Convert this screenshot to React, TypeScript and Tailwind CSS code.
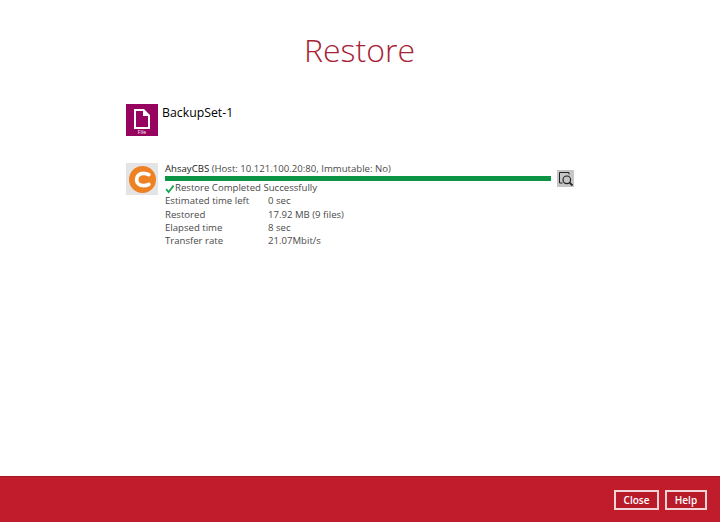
const stats = [
  { label: "Estimated time left", value: "0 sec" },
  { label: "Restored", value: "17.92 MB (9 files)" },
  { label: "Elapsed time", value: "8 sec" },
  { label: "Transfer rate", value: "21.07Mbit/s" },
];

const FileIcon = () => (
  <div className="flex h-8 w-8 shrink-0 flex-col items-center bg-[#96045f] pt-[5px]">
    <svg width="16" height="20" viewBox="0 0 16 20">
      <path d="M0 0H10L16 6V20H0ZM2 2V18H14V7H9V2Z" fill="#fff" fillRule="evenodd" />
    </svg>
    <span className="text-[5px] leading-[6px] font-semibold text-[#f0d8e6]">File</span>
  </div>
);

const CbsIcon = () => (
  <div className="flex h-8 w-8 shrink-0 items-center justify-center bg-[#e4e4e4]">
    <svg width="27" height="27" viewBox="0 0 27 27">
      <circle cx="13.5" cy="13.5" r="13.5" fill="#ee8122" />
      <path d="M19.8 8.6C18 7.6 16.2 7.3 14.6 7.3C10.4 7.3 7.6 10 7.6 13.5C7.6 17 10.4 19.7 14.6 19.7C16.2 19.7 18 19.4 19.8 18.4" fill="none" stroke="#fff" strokeWidth="3.8" strokeLinecap="round" />
    </svg>
  </div>
);

const App = () => {
  return (
    <div className="flex h-[522px] w-[720px] flex-col overflow-hidden bg-white font-['Open_Sans',sans-serif] text-[#4a4a4a]">
      <main className="flex-1 pl-[126px] pr-[146px]">
        <h1 className="mt-[28px] -ml-[127px] -mr-[146px] text-center text-[32px] leading-[44px] font-light text-[#a82236]">
          Restore
        </h1>

        <div className="mt-[32px] flex gap-1">
          <FileIcon />
          <span className="text-[12.3px] leading-[18px] text-black">BackupSet-1</span>
        </div>

        <div className="mt-[27px] flex gap-[7px]">
          <CbsIcon />
          <div className="flex-1">
            <p className="mt-[-1px] text-[9.6px] leading-[14px]">
              <span className="text-[#222]">AhsayCBS</span> (Host: 10.121.100.20:80, Immutable: No)
            </p>
            <div className="mt-[-6px] flex items-center gap-[6px]">
              <div className="h-[5px] w-[386px] bg-[#0b9444]" />
              <button className="flex h-[17px] w-[17px] items-center justify-center bg-[#c6c6c6]">
                <svg width="15" height="15" viewBox="0 0 15 15" fill="none" stroke="#222">
                  <path d="M11 3.5V1.5H1.5V12H4.5" strokeWidth="1" />
                  <circle cx="8.8" cy="8.8" r="3.8" strokeWidth="1.2" />
                  <path d="M11.6 11.6L14.5 14.5" strokeWidth="1.9" />
                </svg>
              </button>
            </div>
            <div className="mt-[-6px] flex items-center text-[9.6px] leading-[13.3px]">
              <svg width="10" height="10" viewBox="0 0 10 10" className="mt-[2px]">
                <path d="M1.2 5.2L3.6 8L8.6 1.6" fill="none" stroke="#18a55a" strokeWidth="1.8" />
              </svg>
              Restore Completed Successfully
            </div>
            <div className="text-[9.6px] leading-[13.3px]">
              {stats.map((s) => (
                <div key={s.label} className="flex">
                  <span className="w-[103px]">{s.label}</span>
                  <span>{s.value}</span>
                </div>
              ))}
            </div>
          </div>
        </div>
      </main>

      <footer className="flex h-[46px] items-center justify-end gap-[6px] border-t border-[#a51626] bg-[#c01c2c] pr-[13px]">
        <button className="h-[20px] w-[45px] border-2 border-[#f3d3d6] bg-[#b81a2a] text-[10px] leading-none font-semibold text-white">
          Close
        </button>
        <button className="h-[20px] w-[42px] border-2 border-[#f3d3d6] bg-[#b81a2a] text-[10px] leading-none font-semibold text-white">
          Help
        </button>
      </footer>
    </div>
  );
};

export default App;
